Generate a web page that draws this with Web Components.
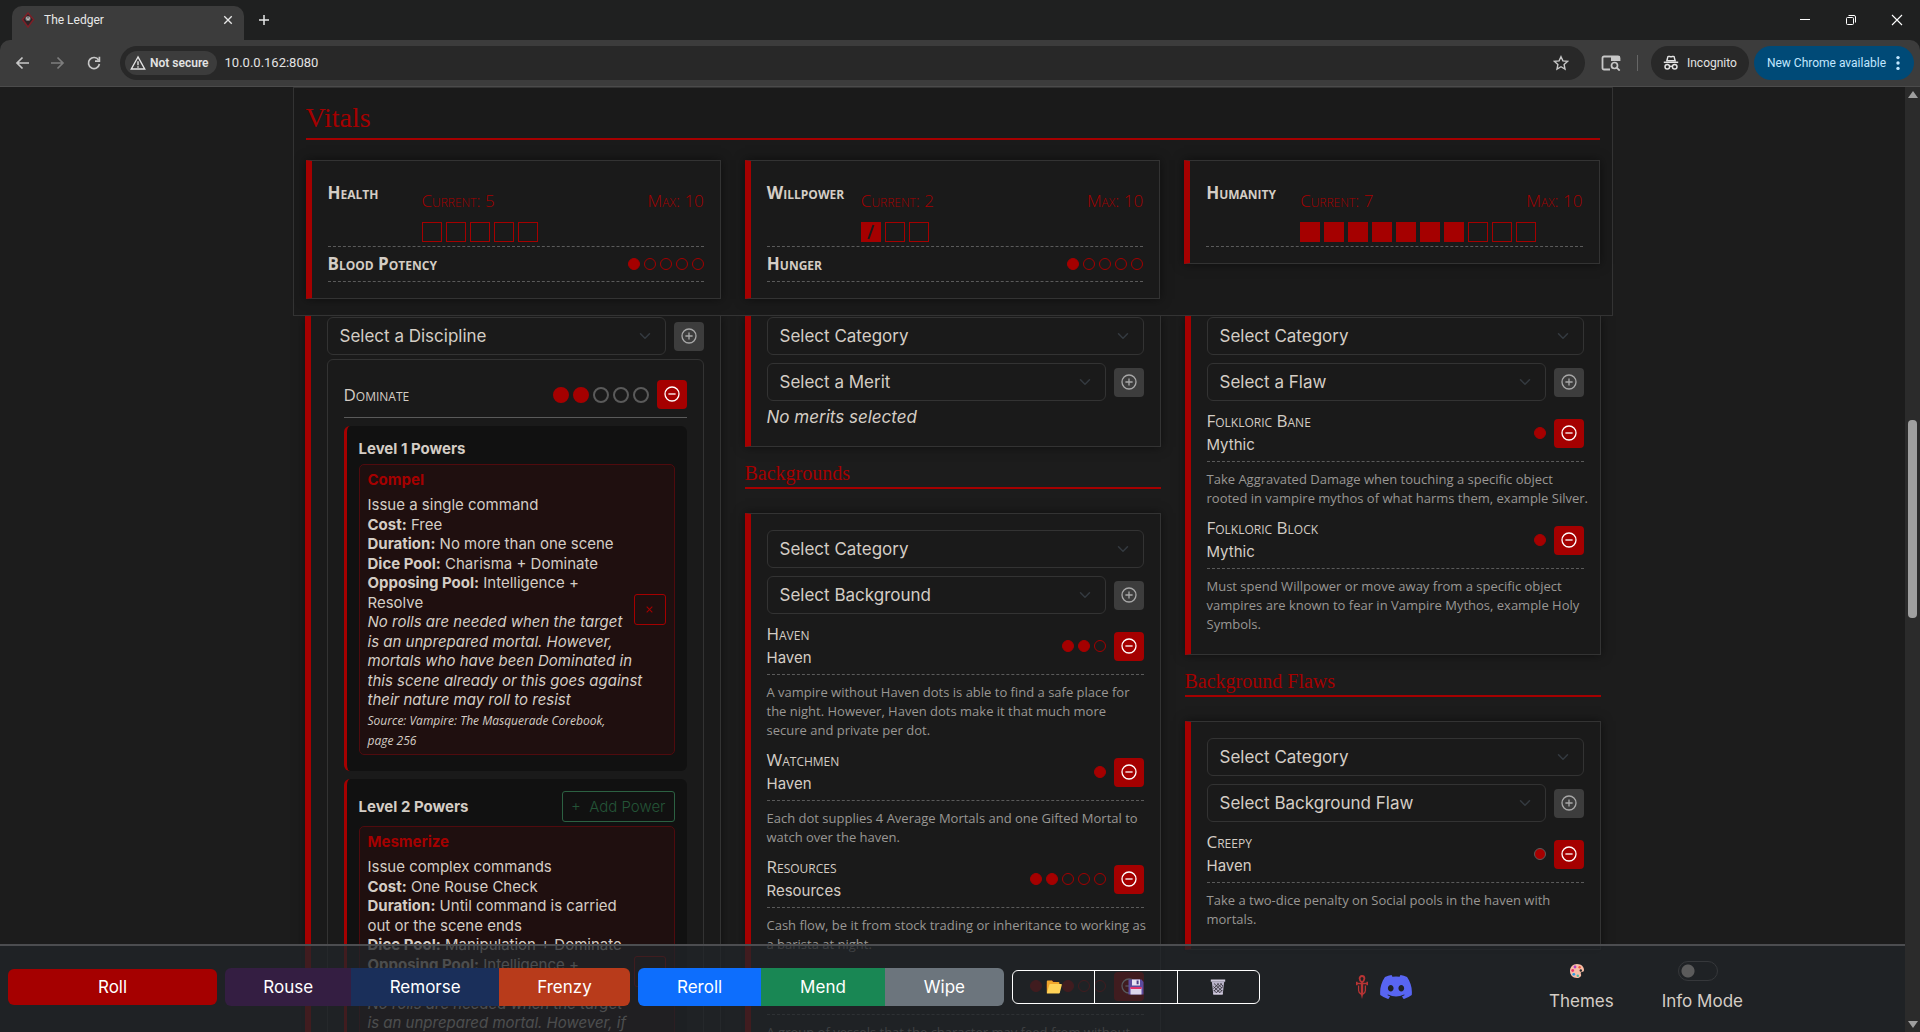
<!DOCTYPE html>
<html lang="en">
<head>
<meta charset="utf-8">
<title>The Ledger</title>
<style>
:root{
  --red:#a50000; --text:#d4cdc5; --muted:#999794; --page:#1c1c1c; --card:#1a1a1a; --line:#333333; --dash:#5a5a5a;
  --sans:Inter,"Open Sans",sans-serif; --caps:"Open Sans",sans-serif; --serif:"Liberation Serif",serif; --ui:Roboto,"Noto Sans",sans-serif;
}
html,body{height:100%;margin:0}
body{background:var(--page);color:var(--text);font:17px/24px var(--sans);overflow:hidden}
</style>
</head>
<body>
<ledger-window></ledger-window>

<script>
const RESET = `*{box-sizing:border-box}button,select,input{font:inherit;color:inherit;margin:0}button{cursor:pointer}svg{display:block}
.caps{font-family:var(--caps);font-size:17px;font-variant:small-caps}`;

/* Registers an element whose shadow root holds the given styles and markup. */
function element(name, css, markup){
  customElements.define(name, class extends HTMLElement{
    connectedCallback(){
      if(this.shadowRoot) return;
      const t = document.createElement('template');
      t.innerHTML = `<style>${RESET}${css}</style>` + (typeof markup === 'function' ? markup(this) : markup);
      this.attachShadow({mode:'open'}).append(t.content.cloneNode(true));
    }
  });
}
const attr = (el, n, d='') => el.getAttribute(n) ?? d;

/* ---------- icons ---------- */
const ICONS = {
  back:['0 0 16 16','<path d="M15 8H3M8.500 2.500 3 8l5.500 5.500" fill="none" stroke="currentColor" stroke-width="1.700"/>'],
  forward:['0 0 16 16','<path d="M1 8h12M7.500 2.500 13 8l-5.500 5.500" fill="none" stroke="currentColor" stroke-width="1.700"/>'],
  reload:['0 0 16 16','<path d="M12.600 5A5.500 5.500 0 1 0 13.400 9" fill="none" stroke="currentColor" stroke-width="1.700"/><path d="M13.400 1.800v4.400H9" fill="none" stroke="currentColor" stroke-width="1.700"/>'],
  warn:['0 0 16 16','<path d="M8 2 1.300 14h13.400z" fill="none" stroke="currentColor" stroke-width="1.400"/><path d="M8 6.200v4M8 11.200v1.500" stroke="currentColor" stroke-width="1.400"/>'],
  star:['0 0 16 16','<path d="m8 1.700 1.900 4.200 4.600.5-3.400 3.100.9 4.500L8 11.700 4 14l.9-4.500L1.500 6.400l4.600-.5z" fill="none" stroke="currentColor" stroke-width="1.400"/>'],
  panel:['0 0 20 16','<path d="M9 14.500H3a1.500 1.500 0 0 1-1.500-1.500V3A1.500 1.500 0 0 1 3 1.500h14A1.500 1.500 0 0 1 18.500 3v3" fill="none" stroke="currentColor" stroke-width="1.800"/><path d="M10 1h8.500v5H10z" fill="currentColor"/><circle cx="13.500" cy="10.500" r="3" fill="none" stroke="currentColor" stroke-width="1.700"/><path d="m15.700 12.700 3 3" stroke="currentColor" stroke-width="1.700"/>'],
  spy:['0 0 16 16','<path d="M5 1.500c1-.6 1.700.3 3 .3s2-.9 3-.3l1.200 4.300H3.800z" fill="none" stroke="currentColor" stroke-width="1.400"/><path d="M.8 7.300h14.400" stroke="currentColor" stroke-width="1.500"/><circle cx="4.300" cy="11.800" r="2.300" fill="none" stroke="currentColor" stroke-width="1.500"/><circle cx="11.700" cy="11.800" r="2.300" fill="none" stroke="currentColor" stroke-width="1.500"/><path d="M6.500 11.600q1.500-1 3 0" fill="none" stroke="currentColor" stroke-width="1.300"/>'],
  dots:['0 0 16 16','<circle cx="8" cy="2.600" r="1.700" fill="currentColor"/><circle cx="8" cy="8" r="1.700" fill="currentColor"/><circle cx="8" cy="13.400" r="1.700" fill="currentColor"/>'],
  cross:['0 0 16 16','<path d="m3 3 10 10M13 3 3 13" stroke="currentColor" stroke-width="1.800"/>'],
  close:['0 0 16 16','<path d="m3 3 10 10M13 3 3 13" stroke="currentColor" stroke-width="1.100"/>'],
  add:['0 0 16 16','<path d="M8 3v10M3 8h10" stroke="currentColor" stroke-width="1.500"/>'],
  min:['0 0 16 16','<path d="M3 7.500h10" stroke="currentColor"/>'],
  restore:['0 0 16 16','<rect x="3.500" y="5.500" width="7" height="7" rx="1" fill="none" stroke="currentColor"/><path d="M5.500 3.500h5.500a1.500 1.500 0 0 1 1.500 1.500v5.500" fill="none" stroke="currentColor"/>'],
  fav:['0 0 16 16','<path d="m8 1 5.500 6.500L8 15 2.500 7.500z" fill="#2b2326" stroke="#7d1f27" stroke-width="1.500"/><circle cx="8" cy="6.500" r="2.600" fill="#777"/><path d="M6.500 5.500 7.500 8M9.500 5.500 8.500 8" stroke="#ddd" stroke-width=".8"/>'],
  plus:['0 0 16 16','<circle cx="8" cy="8" r="7" fill="none" stroke="currentColor" stroke-width="1.300"/><path d="M8 4.400v7.200M4.400 8h7.200" stroke="currentColor" stroke-width="1.300"/>'],
  minus:['0 0 16 16','<circle cx="8" cy="8" r="7" fill="none" stroke="currentColor" stroke-width="1.300"/><path d="M4.400 8h7.200" stroke="currentColor" stroke-width="1.300"/>'],
  chevron:['0 0 16 16','<path d="m2 5 6 6 6-6" fill="none" stroke="currentColor" stroke-width="2" stroke-linecap="round" stroke-linejoin="round"/>'],
  folder:['0 0 16 16','<path d="M.8 14V2.400q0-.9.900-.9h4.200l1.400 1.600h5.200q.9 0 .9.900V14z" fill="#f0a52b"/><path d="M.8 14.500 3.300 5.800q.2-.7.900-.7h11q.8 0 .6.800l-2 7.900q-.2.700-.9.700z" fill="#ffd257"/>'],
  floppy:['0 0 16 16','<path d="M.5.500h13L15.500 3v12.500H.5z" fill="#5b4b9e"/><path d="M4 .5h8v6H4z" fill="#e7e2f2"/><path d="M8.600 1.500h2v3.800h-2z" fill="#4a3d86"/><path d="M2.500 8.500h11v7h-11z" fill="#ddd6ec"/><path d="M2.500 8h11v2h-11z" fill="#e0336b"/>'],
  trash:['0 0 16 16','<path d="M.8.500h14.400v2.200H.8z" fill="#cfc9dc"/><path d="M1.800 2.700h12.400l-1.500 12.800H3.300z" fill="#b9b3c9"/><path d="M4 4.500 12 12M7 4.500l5 4.600M10.200 4.500 13 7M3.400 7.500l6.500 6M3.700 11l3 3M12 4.500 4 12M9 4.500 3.400 9.500M13 7.500 6.500 13.500M12.400 11l-3 3" stroke="#3b3941" stroke-width=".9"/><path d="M3.200 14h9.600l-.2 1.500H3.400z" fill="#cfc9dc"/>'],
  palette:['0 0 16 16','<path d="M8 1c4.500 0 7 2.800 7 6 0 1.500-.9 1.900-2.200 2-1.200.1-1.300 1-.8 2.300.7 2-1 3.700-4 3.700-4.500 0-7-3.300-7-7s2.700-7 7-7z" fill="#f6bda6"/><circle cx="6" cy="4" r="1.400" fill="#b83fc4"/><circle cx="3.700" cy="7.500" r="1.400" fill="#e8336a"/><circle cx="4.800" cy="11.300" r="1.400" fill="#2c9be6"/><circle cx="8.800" cy="12.700" r="1.200" fill="#47b7a5"/><circle cx="10.600" cy="4.200" r="1.200" fill="#ef5a3c"/><circle cx="11.800" cy="7.500" r="1.200" fill="#25282b"/>'],
  ankh:['0 0 12 24','<path d="M6 7.500C2.800 5.500 2.800 1 6 1s3.200 4.500 0 6.500z" fill="none" stroke="#b83434" stroke-width="1.800"/><path d="M6 8v12" stroke="#b83434" stroke-width="2.400"/><path d="M4.600 18h2.800L6 24z" fill="#b83434"/><path d="M.5 8.500h11M.8 6.800v3.400M11.200 6.800v3.400" stroke="#b83434" stroke-width="1.600"/><path d="M2.600 10.500v5q0 2 2.400 3.500M9.400 10.500v5q0 2-2.400 3.500" fill="none" stroke="#b83434" stroke-width="1.300"/>'],
  discord:['0 0 127 96','<path d="M107.700 8.070A105.150 105.150 0 0 0 81.470 0a72.060 72.060 0 0 0-3.360 6.830 97.680 97.680 0 0 0-29.110 0A72.370 72.370 0 0 0 45.640 0a105.890 105.890 0 0 0-26.250 8.090C2.790 32.650-1.710 56.600.54 80.210a105.730 105.730 0 0 0 32.170 16.150 77.700 77.700 0 0 0 6.890-11.110 68.420 68.420 0 0 1-10.850-5.180c.91-.66 1.800-1.340 2.660-2a75.570 75.570 0 0 0 64.320 0c.87.710 1.760 1.390 2.660 2a68.680 68.680 0 0 1-10.870 5.190 77 77 0 0 0 6.890 11.100 105.250 105.250 0 0 0 32.190-16.140c2.640-27.380-4.510-51.110-18.900-72.150ZM42.450 65.690C36.180 65.690 31 60 31 53s5-12.740 11.430-12.740S54 46 53.890 53s-5.050 12.690-11.440 12.690Zm42.240 0C78.410 65.690 73.250 60 73.250 53s5-12.740 11.440-12.740S96.230 46 96.120 53s-5.040 12.690-11.430 12.690Z" fill="#5865f2"/>'],
};
element('app-icon', `:host{display:inline-block;flex:none;width:16px;height:16px}svg{width:100%;height:100%}`,
  el => { const [vb, body] = ICONS[attr(el,'name')]; return `<svg viewBox="${vb}" aria-hidden="true">${body}</svg>`; });

/* ---------- browser frame ---------- */
element('tab-strip', `
  :host{display:flex;height:40px;background:#1f2020;padding:6px 0 0 12px;font:12px/16px var(--ui);color:#e8e8e8}
  .tab{display:flex;align-items:center;gap:8px;width:232px;height:34px;padding:0 8px 6px;background:#3c3c3c;border-radius:10px 10px 0 0}
  .tab span{flex:1}
  button{display:grid;place-items:center;border:0;background:none;padding:0;width:16px;height:28px}
  .new{margin-left:12px}
  .win{display:flex;margin-left:auto;gap:30px;padding-right:15px;color:#fff}
  .small{width:12px;height:12px}`,
  `<div class="tab"><app-icon name="fav"></app-icon><span>The Ledger</span><button aria-label="Close tab"><app-icon class="small" name="cross"></app-icon></button></div>
  <button class="new" aria-label="New tab"><app-icon name="add"></app-icon></button>
  <div class="win"><button aria-label="Minimize"><app-icon name="min"></app-icon></button><button aria-label="Restore"><app-icon name="restore"></app-icon></button><button aria-label="Close"><app-icon name="close"></app-icon></button></div>`);

element('tool-bar', `
  :host{display:flex;align-items:center;height:47px;padding:0 6px 1px 14px;background:#3c3c3c;border-bottom:1px solid #4b4b4b;border-radius:10px 10px 0 0;font:12px/16px var(--ui);color:#c7c7c7}
  button{display:flex;align-items:center;border:0;background:none;padding:0}
  nav{display:flex;gap:20px;margin-right:18px}
  .off{color:#7d7d7d}
  .omni{display:flex;align-items:center;flex:1;height:34px;padding:0 16px 0 5px;border-radius:17px;background:#282828}
  .chip{gap:4px;height:24px;padding:0 8px 0 5px;border-radius:12px;background:#3c3c3c;color:#e3e3e3;font-weight:600}
  input{flex:1;margin-left:8px;border:0;background:none;padding:0;outline:0;font-size:13px;color:#e3e3e3}
  .panel{width:20px;margin-left:16px}
  i{width:1px;height:16px;background:#666;margin:0 13px 0 16px}
  .pill{height:34px;border-radius:17px;gap:8px}
  .who{background:#282828;color:#e3e3e3;padding:0 12px}
  .new{background:#004a77;color:#c2e7ff;padding:0 8px 0 13px;margin-left:5px;gap:4px}`,
  `<nav><button aria-label="Back"><app-icon name="back"></app-icon></button><button class="off" aria-label="Forward"><app-icon name="forward"></app-icon></button><button aria-label="Reload"><app-icon name="reload"></app-icon></button></nav>
  <div class="omni"><button class="chip"><app-icon name="warn"></app-icon>Not secure</button><input aria-label="Address" value="10.0.0.162:8080"><button aria-label="Bookmark"><app-icon name="star"></app-icon></button></div>
  <button aria-label="Side panel"><app-icon class="panel" name="panel"></app-icon></button><i></i>
  <button class="pill who"><app-icon name="spy"></app-icon>Incognito</button>
  <button class="pill new">New Chrome available<app-icon name="dots"></app-icon></button>`);

element('scroll-rail', `
  :host{display:flex;flex-direction:column;align-items:center;width:15px;background:#2b2b2b;padding:4px 0}
  .up,.down{width:0;height:0;border:5px solid transparent}
  .up{border-top:0;border-bottom:7px solid #9f9f9f}.down{border-bottom:0;border-top:7px solid #9f9f9f}
  .lead{flex:322}.thumb{flex:197;width:9px;border-radius:4px;background:#9f9f9f}.rest{flex:403}`,
  `<div class="up"></div><div class="lead"></div><div class="thumb"></div><div class="rest"></div><div class="down"></div>`);

/* ---------- sheet parts ---------- */
element('dot-rating', `
  :host{display:flex;gap:4px;--edge:var(--red)}
  :host([large]),:host([plain]){--edge:#5a5a5a}
  span{width:12px;height:12px;border-radius:50%;border:1px solid var(--edge)}
  :host([large]) span{width:16px;height:16px;border-width:2px}
  .on{background:var(--red)}
  :host([large]) .on{border-color:var(--red)}`,
  el => { const v=+attr(el,'value'), m=+attr(el,'max',v); return Array.from({length:m},(_,i)=>`<span class="${i<v?'on':''}"></span>`).join(''); });

element('box-track', `
  :host{display:flex;gap:4px}
  span{width:20px;height:20px;border:1px solid var(--red);display:grid;place-items:center}
  .on,.hit{background:var(--red)}
  svg{width:18px;height:18px}`,
  el => [...attr(el,'boxes')].map(c => c==='x' ? '<span class="on"></span>' : c==='/' ? '<span class="hit"><svg viewBox="0 0 18 18"><path d="M11.500 2 6.500 16" stroke="#1a1a1a" stroke-width="2"/></svg></span>' : '<span></span>').join(''));

element('sheet-card', `
  :host{display:block;background:var(--card);border:1px solid var(--line);border-left:6px solid var(--red);padding:16px;box-shadow:0 0 10px rgba(0,0,0,.5)}
  :host([continued]){border-top:0;padding-top:1px}`, `<slot></slot>`);

element('sheet-heading', `
  :host{display:block;margin-top:14px;margin-bottom:24px;padding-bottom:2px;border-bottom:2px solid var(--red)}
  h2{margin:0;font:400 20px/24px var(--serif);color:var(--red)}
  :host([large]){margin:0 0 20px}
  :host([large]) h2{font-size:28px;line-height:36px}`, `<h2><slot></slot></h2>`);

element('vital-track', `
  :host{display:flex;gap:16px;padding:4px 0;border-bottom:1px dashed var(--dash)}
  b{min-width:78px}
  .right{flex:1;display:grid;gap:9px;padding-top:8px}
  .nums{display:flex;justify-content:space-between;color:var(--red);font-weight:300}`,
  el => `<b class="caps">${attr(el,'name')}</b><div class="right"><div class="nums caps"><span>Current: ${attr(el,'current')}</span><span>Max: ${attr(el,'max')}</span></div><box-track boxes="${attr(el,'boxes')}"></box-track></div>`);

element('vital-dots', `
  :host{display:flex;align-items:center;justify-content:space-between;padding:5px 0;border-bottom:1px dashed var(--dash)}`,
  el => `<b class="caps">${attr(el,'name')}</b><dot-rating value="${attr(el,'value')}" max="5"></dot-rating>`);

element('icon-button', `
  :host{display:block;flex:none}
  button{display:grid;place-items:center;width:30px;height:29px;padding:0 0 1px;border:0;border-radius:4px;background:#3d3d3d;color:#a8a8a8}
  :host([name=minus]) button{background:var(--red);color:#fff}`,
  el => `<button aria-label="${attr(el,'name')==='plus'?'Add':'Remove'}"><app-icon name="${attr(el,'name')}"></app-icon></button>`);

element('choice-row', `
  :host{display:flex;align-items:center;gap:8px}
  :host(:not([last])){margin-bottom:8px}
  .box{display:grid;flex:1;align-items:center}
  select{grid-area:1/1;appearance:none;width:100%;height:38px;padding:0 36px 0 12px;border:1px solid var(--line);border-radius:6px;background:var(--card)}
  .box app-icon{grid-area:1/1;justify-self:end;width:12px;height:12px;margin-right:15px;color:#343a40;pointer-events:none}`,
  el => `<div class="box"><select aria-label="${attr(el,'label')}"><option>${attr(el,'label')}</option></select><app-icon name="chevron"></app-icon></div>${el.hasAttribute('add')?'<icon-button name="plus"></icon-button>':''}`);

element('trait-item', `
  :host{display:block;padding-top:8px}
  :host(:last-child){padding-bottom:4px}
  .row{display:flex;align-items:center;gap:8px;padding-bottom:4px;border-bottom:1px dashed var(--dash)}
  .names{flex:1}
  .kind{font-size:15px}
  p{margin:8px 0 0;font:13px/19px var(--caps);color:var(--muted);white-space:nowrap}`,
  el => `<div class="row"><div class="names"><div class="caps">${attr(el,'name')}</div><div class="kind">${attr(el,'kind')}</div></div>
    <dot-rating value="${attr(el,'value')}" max="${attr(el,'max',attr(el,'value'))}"${el.hasAttribute('plain')?' plain':''}></dot-rating><icon-button name="minus"></icon-button></div><p><slot></slot></p>`);

element('power-level', `
  :host{display:block;margin-top:8px;padding:12px 12px 16px;border-left:3px solid var(--red);border-radius:6px;background:#111;font-size:15px;line-height:22px}
  header{display:flex;justify-content:space-between;align-items:center;margin-bottom:4px}
  button{height:31px;padding:0 8px;border:1px solid #2c6142;border-radius:3px;background:none;color:#245437;font-weight:300}`,
  el => `<header><b>Level ${attr(el,'level')} Powers</b>${el.hasAttribute('add')?'<button>+&nbsp; Add Power</button>':''}</header><slot></slot>`);

element('power-card', `
  :host{display:flex;min-height:291px;padding:4px 8px;border:1px solid #500b0e;border-radius:5px;background:#1f0f0f;line-height:1.3}
  .body{flex:1;min-width:0;white-space:nowrap}
  h3{margin:0 0 4px;font:700 15px/22px var(--sans);color:var(--red)}
  button{align-self:center;flex:none;width:32px;height:31px;border:1px solid var(--red);border-radius:3px;background:none;color:var(--red);padding:0}
  app-icon{width:9px;height:9px;display:block;margin:auto}`,
  el => `<div class="body"><h3>${attr(el,'name')}</h3><slot></slot></div><button aria-label="Remove power"><app-icon name="cross"></app-icon></button>`);

element('discipline-box', `
  :host{display:block;margin-top:4px;padding:12px 16px 16px;border:1px solid var(--line);border-radius:6px}
  .top{display:flex;align-items:center;gap:8px;padding:8px 0;border-bottom:1px solid #5a5a5a}
  .top span{flex:1}`,
  el => `<div class="top"><span class="caps">${attr(el,'name')}</span><dot-rating large value="${attr(el,'value')}" max="5"></dot-rating><icon-button name="minus"></icon-button></div><slot></slot>`);

/* ---------- bottom bar ---------- */
element('action-bar', `
  :host{display:grid;grid-template-columns:209fr 405fr 366fr 248fr 231fr 390fr;gap:8px;align-items:center;height:88px;padding:0 8px 4px;border-top:2px solid #4c4d50;background:rgba(33,37,41,.76);color:#fff}
  .group{display:flex;border-radius:6px;overflow:hidden;height:38px}
  button{border:0;padding:0;background:none}
  .group button{flex:1 1 auto}
  .roll{height:36px;border-radius:6px;background:var(--red)}
  .rouse{background:#341e42}.remorse{background:#1a2f5a}.frenzy{background:#b83b1b}
  .reroll{background:#0d6efd}.mend{background:#198754}.wipe{background:#6c757d}
  .files{height:34px;border:1px solid #fff}
  .files button{flex:1;display:grid;place-items:center}
  .files button+button{border-left:1px solid #fff}
  .logos{display:flex;justify-content:center;align-items:center;gap:12px}
  a{display:block}
  .ankh{display:block;width:12px;height:24px}.discord{display:block;width:32px;height:24px}
  .modes{display:flex;gap:48px;padding-left:42px;color:var(--text)}
  .modes button,label{display:grid;justify-items:center;gap:8px;color:inherit}
  .pal{width:16px;height:20px;padding:2px 0;margin-right:8px}
  input{appearance:none;width:40px;height:20px;border:1px solid #36383b;border-radius:10px;background:radial-gradient(circle at 9px 9px,#5b5b5b 6px,transparent 7px);margin-right:8px}`,
  `<button class="roll">Roll</button>
  <div class="group"><button class="rouse">Rouse</button><button class="remorse">Remorse</button><button class="frenzy">Frenzy</button></div>
  <div class="group"><button class="reroll">Reroll</button><button class="mend">Mend</button><button class="wipe">Wipe</button></div>
  <div class="group files"><button aria-label="Open"><app-icon name="folder"></app-icon></button><button aria-label="Save"><app-icon name="floppy"></app-icon></button><button aria-label="Delete"><app-icon name="trash"></app-icon></button></div>
  <div class="logos"><a href="#" aria-label="Vampire"><app-icon class="ankh" name="ankh"></app-icon></a><a href="#" aria-label="Discord"><app-icon class="discord" name="discord"></app-icon></a></div>
  <div class="modes"><button><app-icon class="pal" name="palette"></app-icon>Themes</button><label><input type="checkbox">Info Mode</label></div>`);

/* ---------- page ---------- */
element('vitals-panel', `
  :host{display:block;position:relative;z-index:1;padding:12px 12px 16px;border:1px solid var(--line);background:var(--card)}
  .cols{display:grid;grid-template-columns:repeat(3,minmax(0,1fr));gap:24px;align-items:start}`,
  `<sheet-heading large>Vitals</sheet-heading>
  <div class="cols">
    <sheet-card><vital-track name="Health" current="5" max="10" boxes="-----"></vital-track><vital-dots name="Blood Potency" value="1"></vital-dots></sheet-card>
    <sheet-card><vital-track name="Willpower" current="2" max="10" boxes="/--"></vital-track><vital-dots name="Hunger" value="1"></vital-dots></sheet-card>
    <sheet-card><vital-track name="Humanity" current="7" max="10" boxes="xxxxxxx---"></vital-track></sheet-card>
  </div>`);

element('character-sheet', `
  :host{display:block;max-width:1320px;margin:0 auto}
  .cols{display:grid;grid-template-columns:repeat(3,minmax(0,1fr));gap:24px;align-items:start;padding:0 12px}
  .none{margin:4px 0 0;padding-bottom:1px;font-style:italic}
  small{font:12px/19px var(--caps)}`,
  `<vitals-panel></vitals-panel>
  <div class="cols">
    <sheet-card continued>
      <choice-row last label="Select a Discipline" add></choice-row>
      <discipline-box name="Dominate" value="2">
        <power-level level="1"><power-card name="Compel">Issue a single command<br><b>Cost:</b> Free<br><b>Duration:</b> No more than one scene<br><b>Dice Pool:</b> Charisma + Dominate<br><b>Opposing Pool:</b> Intelligence +<br>Resolve<br><i>No rolls are needed when the target<br>is an unprepared mortal. However,<br>mortals who have been Dominated in<br>this scene already or this goes against<br>their nature may roll to resist</i><br><small><i>Source: Vampire: The Masquerade Corebook,<br>page 256</i></small></power-card></power-level>
        <power-level level="2" add><power-card name="Mesmerize">Issue complex commands<br><b>Cost:</b> One Rouse Check<br><b>Duration:</b> Until command is carried<br>out or the scene ends<br><b>Dice Pool:</b> Manipulation + Dominate<br><b>Opposing Pool:</b> Intelligence +<br>Resolve<br><i>No rolls are needed when the target<br>is an unprepared mortal. However, if</i></power-card></power-level>
      </discipline-box>
    </sheet-card>
    <div>
      <sheet-card continued>
        <choice-row label="Select Category"></choice-row>
        <choice-row last label="Select a Merit" add></choice-row>
        <p class="none">No merits selected</p>
      </sheet-card>
      <sheet-heading>Backgrounds</sheet-heading>
      <sheet-card>
        <choice-row label="Select Category"></choice-row>
        <choice-row last label="Select Background" add></choice-row>
        <trait-item name="Haven" kind="Haven" value="2" max="3">A vampire without Haven dots is able to find a safe place for<br>the night. However, Haven dots make it that much more<br>secure and private per dot.</trait-item>
        <trait-item name="Watchmen" kind="Haven" value="1">Each dot supplies 4 Average Mortals and one Gifted Mortal to<br>watch over the haven.</trait-item>
        <trait-item name="Resources" kind="Resources" value="2" max="5">Cash flow, be it from stock trading or inheritance to working as<br>a barista at night.</trait-item>
        <trait-item name="Herd" kind="Herd" value="3" max="5">A group of vessels that the character may feed from without</trait-item>
      </sheet-card>
    </div>
    <div>
      <sheet-card continued>
        <choice-row label="Select Category"></choice-row>
        <choice-row last label="Select a Flaw" add></choice-row>
        <trait-item name="Folkloric Bane" kind="Mythic" value="1">Take Aggravated Damage when touching a specific object<br>rooted in vampire mythos of what harms them, example Silver.</trait-item>
        <trait-item name="Folkloric Block" kind="Mythic" value="1">Must spend Willpower or move away from a specific object<br>vampires are known to fear in Vampire Mythos, example Holy<br>Symbols.</trait-item>
      </sheet-card>
      <sheet-heading>Background Flaws</sheet-heading>
      <sheet-card>
        <choice-row label="Select Category"></choice-row>
        <choice-row last label="Select Background Flaw" add></choice-row>
        <trait-item name="Creepy" kind="Haven" value="1" plain>Take a two-dice penalty on Social pools in the haven with<br>mortals.</trait-item>
      </sheet-card>
    </div>
  </div>`);

element('ledger-window', `
  :host{display:flex;flex-direction:column;height:100vh;background:#1f2020}
  .view{display:flex;flex:1;min-height:0}
  main{position:relative;flex:1;min-width:0;overflow:hidden;background:var(--page)}
  action-bar{position:absolute;left:0;right:0;bottom:0;z-index:2}`,
  `<tab-strip></tab-strip><tool-bar></tool-bar>
  <div class="view"><main><character-sheet></character-sheet><action-bar></action-bar></main><scroll-rail></scroll-rail></div>`);
</script>
</body>
</html>
